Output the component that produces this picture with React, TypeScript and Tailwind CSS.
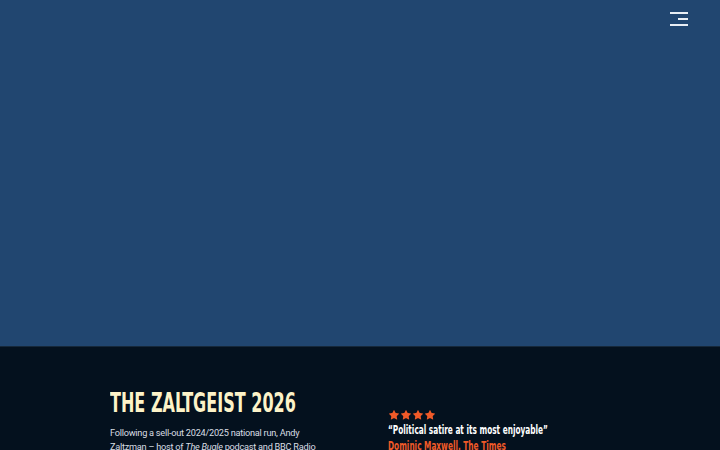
import { Star } from "lucide-react";

const condensed = {
  fontFamily: '"DejaVu Sans Condensed", "DejaVu Sans", sans-serif',
};

export default function App() {
  return (
    <div className="min-h-screen bg-[#04111e]">
      <header className="relative h-[346px] bg-[#214670]">
        <button className="absolute right-[32px] top-[12px] flex w-[18px] flex-col items-end gap-[4px]">
          <span className="block h-[2px] w-[18px] bg-[#e8eef5]" />
          <span className="block h-[2px] w-[10px] bg-[#e8eef5]" />
          <span className="block h-[2px] w-[18px] bg-[#e8eef5]" />
        </button>
      </header>
      <section className="border-t border-[#16283a] pt-[40px]">
        <div className="mx-auto flex w-[500px]">
          <div className="w-[278px] shrink-0">
            <h1
              className="h-[32px] whitespace-nowrap text-[27px] font-bold leading-[32px] text-[#fdf3c8]"
              style={condensed}
            >
              <span className="inline-block origin-left scale-x-[0.66]">THE ZALTGEIST 2026</span>
            </h1>
            <p
              className="mt-[7px] w-[208px] text-[9.2px] leading-[14px] tracking-[-0.25px] text-[#d8dde3]"
              style={{ fontFamily: 'Roboto, "Liberation Sans", sans-serif' }}
            >
              Following a sell-out 2024/2025 national run, Andy Zaltzman – host of{" "}
              <em>The Bugle</em> podcast and BBC Radio 4’s <em>The News Quiz</em>
            </p>
          </div>
          <div className="pt-[22px]">
            <div className="flex text-[#f05a28]">
              {[0, 1, 2, 3].map((i) => (
                <Star key={i} size={12} fill="currentColor" strokeWidth={0} />
              ))}
            </div>
            <p
              className="mt-[1px] whitespace-nowrap text-[12.5px] font-bold leading-[16px] text-white"
              style={condensed}
            >
              <span className="inline-block origin-left scale-x-[0.655]">
                “Political satire at its most enjoyable”
              </span>
            </p>
            <p
              className="whitespace-nowrap text-[12.5px] font-bold leading-[16px] text-[#f05a28]"
              style={condensed}
            >
              <span className="inline-block origin-left scale-x-[0.655]">
                Dominic Maxwell, The Times
              </span>
            </p>
          </div>
        </div>
      </section>
    </div>
  );
}
